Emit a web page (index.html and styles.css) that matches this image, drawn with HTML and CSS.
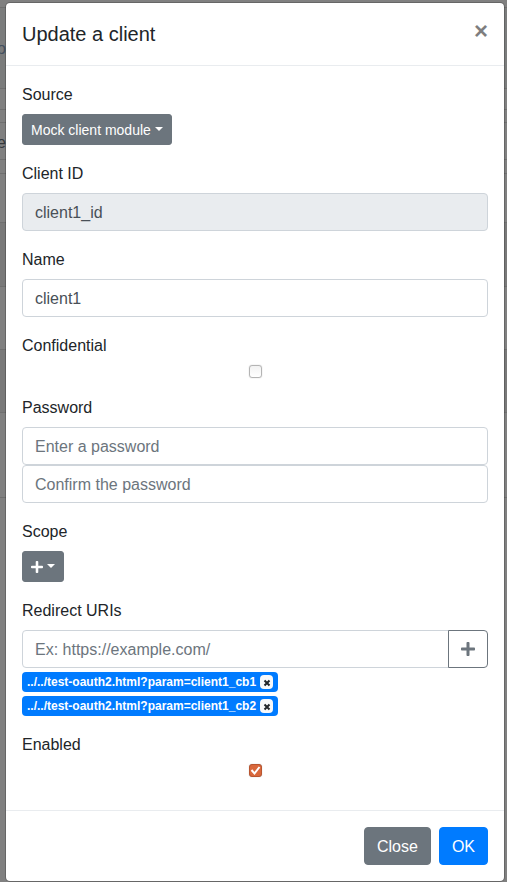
FILE: index.html
```html
<!DOCTYPE html>
<html lang="en">
<head>
<meta charset="utf-8">
<meta name="viewport" content="width=device-width, initial-scale=1">
<title>Update a client</title>
<link rel="stylesheet" href="styles.css">
</head>
<body>
<div class="backdrop" aria-hidden="true">
  <div class="page-row page-gap"></div>
  <div class="page-row page-nav">o</div>
  <div class="page-row page-title"></div>
  <div class="page-row page-space"></div>
  <div class="page-row page-search">e</div>
  <div class="page-row page-space"></div>
  <div class="page-row page-head"></div>
  <div class="page-row page-item striped"></div>
  <div class="page-row page-item"></div>
  <div class="page-row page-item striped"></div>
  <div class="page-row page-foot"></div>
</div>
<main class="dialog" role="dialog" aria-labelledby="dialog-title">
  <form class="content">
    <header class="header">
      <h1 class="title" id="dialog-title">Update a client</h1>
      <button type="button" class="close" aria-label="Close">×</button>
    </header>
    <div class="body">
      <div class="group">
        <label for="source">Source</label>
        <button type="button" class="btn btn-sm secondary" id="source">Mock client module<span class="caret"></span></button>
      </div>
      <div class="group">
        <label for="client-id">Client ID</label>
        <input class="control" id="client-id" type="text" value="client1_id" disabled>
      </div>
      <div class="group">
        <label for="name">Name</label>
        <input class="control" id="name" type="text" value="client1">
      </div>
      <div class="group">
        <label for="confidential">Confidential</label>
        <input class="check" id="confidential" type="checkbox">
      </div>
      <div class="group">
        <label for="password">Password</label>
        <input class="control" id="password" type="password" placeholder="Enter a password">
        <input class="control" type="password" placeholder="Confirm the password" aria-label="Confirm the password">
      </div>
      <div class="group">
        <label for="scope">Scope</label>
        <button type="button" class="btn btn-sm secondary" id="scope" aria-label="Add scope"><svg class="plus plus-sm" viewBox="0 0 448 512"><path d="M416 208H272V64c0-17.700-14.300-32-32-32h-32c-17.700 0-32 14.300-32 32v144H32c-17.700 0-32 14.300-32 32v32c0 17.700 14.300 32 32 32h144v144c0 17.700 14.300 32 32 32h32c17.700 0 32-14.300 32-32V304h144c17.700 0 32-14.300 32-32v-32c0-17.700-14.300-32-32-32z"/></svg><span class="caret"></span></button>
      </div>
      <div class="group">
        <label for="uri">Redirect URIs</label>
        <div class="input-group">
          <input class="control" id="uri" type="text" placeholder="Ex: https://example.com/">
          <button type="button" class="btn outline" aria-label="Add redirect URI"><svg class="plus" viewBox="0 0 448 512"><path d="M416 208H272V64c0-17.700-14.300-32-32-32h-32c-17.700 0-32 14.300-32 32v144H32c-17.700 0-32 14.300-32 32v32c0 17.700 14.300 32 32 32h144v144c0 17.700 14.300 32 32 32h32c17.700 0 32-14.300 32-32V304h144c17.700 0 32-14.300 32-32v-32c0-17.700-14.300-32-32-32z"/></svg></button>
        </div>
        <div class="tags">
          <span class="tag">../../test-oauth2.html?param=client1_cb1<button type="button" class="remove" aria-label="Remove"><svg viewBox="0 0 8 8"><path d="M1.500 1.500l5 5M6.500 1.500l-5 5"/></svg></button></span>
          <span class="tag">../../test-oauth2.html?param=client1_cb2<button type="button" class="remove" aria-label="Remove"><svg viewBox="0 0 8 8"><path d="M1.500 1.500l5 5M6.500 1.500l-5 5"/></svg></button></span>
        </div>
      </div>
      <div class="group">
        <label for="enabled">Enabled</label>
        <input class="check" id="enabled" type="checkbox" checked>
      </div>
    </div>
    <footer class="footer">
      <button type="button" class="btn secondary">Close</button>
      <button type="button" class="btn primary">OK</button>
    </footer>
  </form>
</main>
</body>
</html>
```
FILE: styles.css
```css
* { box-sizing: border-box; }

body {
  margin: 0;
  position: relative;
  background: #808080;
  color: #212529;
  font: 16px/24px "Liberation Sans", Arial, sans-serif;
}

/* Dimmed page behind the dialog */
.backdrop {
  position: absolute;
  inset: 0;
  overflow: hidden;
  background: #808080;
}
.page-row { border-bottom: 1px solid #6f6f6f; }
.page-gap { height: 8px; }
.page-nav {
  height: 81px;
  padding-top: 29px;
  background: #7b7c7c;
  color: #44505f;
  text-indent: -3px;
}
.page-title { height: 21px; }
.page-space { height: 13px; }
.page-search { height: 37px; padding-top: 8px; color: #34383c; text-indent: -3px; }
.page-search + .page-space { height: 14px; }
.page-head { height: 49px; }
.page-item { height: 63px; }
.page-head + .page-item { height: 64px; }
.page-item.striped { background: #797979; }
.page-foot { height: 85px; }

.dialog {
  position: relative;
  max-width: 507px;
  margin: 0 auto;
  padding: 2px 2px 0 5px;
}
.content {
  background: #fff;
  background-clip: padding-box;
  border: 1px solid rgba(0, 0, 0, .2);
  border-radius: 5px;
}

.header {
  display: flex;
  justify-content: space-between;
  align-items: flex-start;
  padding: 16px;
  border-bottom: 1px solid #e9ecef;
}
.title { margin: 0; font-size: 20px; line-height: 30px; font-weight: 400; }
.close {
  padding: 0;
  border: 0;
  background: none;
  color: #000;
  opacity: .5;
  font: bold 24px/24px "Liberation Sans", Arial, sans-serif;
  text-shadow: 0 1px 0 #fff;
}

.body {
  display: flex;
  flex-direction: column;
  gap: 16px;
  padding: 16px 16px 32px;
}
.group { display: flex; flex-direction: column; align-items: flex-start; }
.group > label { margin-bottom: 6px; line-height: 26px; }

.control {
  width: 100%;
  min-width: 0;
  height: 38px;
  padding: 7px 12px 5px;
  border: 1px solid #ced4da;
  border-radius: 4px;
  background: #fff;
  color: #495057;
  font: inherit;
}
.control:disabled { background: #e9ecef; }
.control::placeholder { color: #6c757d; opacity: 1; }

.btn {
  display: inline-flex;
  align-items: center;
  height: 38px;
  padding: 2px 12px 0;
  border: 1px solid transparent;
  border-radius: 4px;
  font: inherit;
}
.btn-sm { height: 31px; padding: 1px 8px 0; border-radius: 3px; font-size: 14px; line-height: 21px; }
.secondary { background: #6c757d; border-color: #6c757d; color: #fff; }
.primary { background: #007bff; border-color: #007bff; color: #fff; }
.outline { padding: 0 12px; background: #fff; border-color: #6c757d; color: #6c757d; }

.caret {
  margin: 0 0 2px 4px;
  border: 4px solid transparent;
  border-top-color: currentColor;
  border-bottom: 0;
}
.plus { width: 14px; height: 16px; fill: currentColor; }
.plus-sm { width: 12px; height: 14px; }

.input-group { display: flex; width: 100%; }
.input-group .control { flex: 1; border-radius: 4px 0 0 4px; }
.input-group .btn { margin-left: -1px; border-radius: 0 4px 4px 0; }

.check {
  appearance: none;
  align-self: center;
  width: 13px;
  height: 13px;
  margin: 0 0 1px;
  border: 1px solid #b4b4b4;
  border-radius: 3px;
  background: linear-gradient(#f2f2f2, #fff);
  box-shadow: 0 0 1px #aaa;
}
.check:checked {
  border-color: #b9552f;
  background: #d9683c url("data:image/svg+xml,%3Csvg xmlns='http://www.w3.org/2000/svg' viewBox='0 0 11 11'%3E%3Cpath d='M1.500 5l3 3.500L9.500 2' fill='none' stroke='white' stroke-width='2'/%3E%3C/svg%3E") center / 11px 11px;
}

.tags { display: flex; flex-direction: column; align-items: flex-start; gap: 4px; margin-top: 4px; }
.tag {
  display: flex;
  align-items: center;
  gap: 4px;
  height: 20px;
  padding: 0 5px;
  border-radius: 4px;
  background: #007bff;
  color: #fff;
  font-size: 12px;
  line-height: 20px;
  font-weight: 700;
}
.remove {
  display: flex;
  align-items: center;
  justify-content: center;
  width: 13px;
  height: 14px;
  padding: 1px 0 0;
  border: 0;
  border-radius: 4px;
  background: #f8f9fa;
}
.remove svg { width: 8px; height: 8px; fill: none; stroke: #212529; stroke-width: 2; }

.footer {
  display: flex;
  justify-content: flex-end;
  gap: 8px;
  padding: 16px;
  border-top: 1px solid #e9ecef;
}
```
